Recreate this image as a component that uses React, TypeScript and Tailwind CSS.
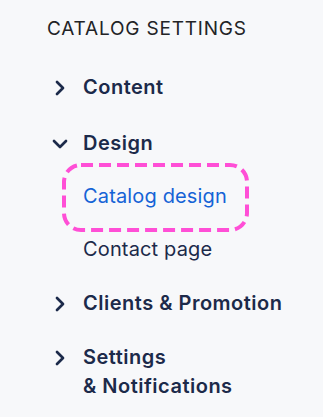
import React from 'react';
import { ChevronRight, ChevronDown } from 'lucide-react';

interface NavItem {
  label: string[];
  open?: boolean;
  top: string;
  children?: { label: string; active?: boolean; top: string }[];
}

const items: NavItem[] = [
  { label: ['Content'], top: 'mt-[32px]' },
  {
    label: ['Design'],
    open: true,
    top: 'mt-[27px]',
    children: [
      { label: 'Catalog design', active: true, top: 'mt-[24px]' },
      { label: 'Contact page', top: 'mt-[24px]' },
    ],
  },
  { label: ['Clients & Promotion'], top: 'mt-[25px]' },
  { label: ['Settings', '& Notifications'], top: 'mt-[25px]' },
];

const Highlight: React.FC = () => (
  <svg
    className="absolute left-[-21px] top-[-19.5px] pointer-events-none"
    width="187"
    height="69"
    viewBox="0 0 187 69"
    fill="none"
  >
    <rect
      x="2"
      y="2"
      width="183"
      height="65"
      rx="17"
      stroke="#ff4fd6"
      strokeWidth="4"
      strokeDasharray="12 6"
    />
  </svg>
);

const App: React.FC = () => {
  return (
    <div
      className="w-[323px] h-[417px] bg-[#f7f8fa] pl-[47px] pt-[17px] overflow-hidden"
      style={{ fontFamily: 'Inter, "Noto Sans", sans-serif' }}
    >
      <h2 className="text-[19px] leading-[24px] font-normal text-[#222326] tracking-[0.8px]">
        CATALOG SETTINGS
      </h2>

      <ul className="ml-[1px]">
        {items.map((item) => (
          <li key={item.label.join(' ')} className={item.top}>
            <div className="flex items-start">
              <span className="w-[24px] h-[29px] flex items-center text-[#1c2a4a]">
                {item.open ? (
                  <ChevronDown size={24} strokeWidth={2.7} />
                ) : (
                  <ChevronRight size={24} strokeWidth={2.7} />
                )}
              </span>
              <span className="ml-[11px] text-[20px] leading-[29px] font-semibold tracking-[0.5px] text-[#1c2a4a]">
                {item.label.map((l) => (
                  <span key={l} className="block">
                    {l}
                  </span>
                ))}
              </span>
            </div>
            {item.children && (
              <ul className="pl-[35px]">
                {item.children.map((c) => (
                  <li
                    key={c.label}
                    className={`${c.top} relative text-[20px] leading-[29px] tracking-[0.15px] ${
                      c.active ? 'text-[#1563d6]' : 'text-[#1c2a4a]'
                    }`}
                  >
                    {c.active && <Highlight />}
                    <span className="relative">{c.label}</span>
                  </li>
                ))}
              </ul>
            )}
          </li>
        ))}
      </ul>
    </div>
  );
};

export default App;
